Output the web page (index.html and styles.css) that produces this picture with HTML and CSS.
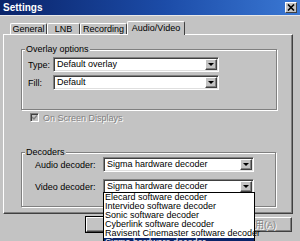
FILE: index.html
```html
<!DOCTYPE html>
<html lang="ja">
<head>
    <meta charset="UTF-8">
    <title>Settings</title>
    <link rel="stylesheet" href="styles.css">
</head>
<body>
    <div class="titlebar">
        <span class="title">Settings</span>
        <span class="close-btn">
            <svg width="8" height="7" viewBox="0 0 8 7"><path d="M1 0.5 L7 6.5 M7 0.5 L1 6.5" stroke="#000" stroke-width="1.6"/></svg>
        </span>
    </div>
    <div class="dialog">
        <div class="tabs">
            <div class="tab tab-general">General</div>
            <div class="tab tab-lnb">LNB</div>
            <div class="tab tab-recording">Recording</div>
            <div class="tab tab-av selected">Audio/Video</div>
        </div>
        <div class="panel">
            <fieldset class="group group-overlay">
                <legend>Overlay options</legend>
                <div class="field">
                    <label class="field-label">Type:</label>
                    <div class="combo combo-overlay"><span class="combo-text">Default overlay</span><span class="combo-btn"></span></div>
                </div>
                <div class="field">
                    <label class="field-label">Fill:</label>
                    <div class="combo combo-overlay"><span class="combo-text">Default</span><span class="combo-btn"></span></div>
                </div>
            </fieldset>

            <div class="check-row disabled">
                <span class="checkbox">
                    <svg width="5" height="5" viewBox="0 0 5 5"><path d="M0 2 L2 4 L5 0.5" stroke="#808080" stroke-width="1.4" fill="none"/></svg>
                </span>
                <span class="check-label">On Screen Displays</span>
            </div>

            <fieldset class="group group-decoders">
                <legend>Decoders</legend>
                <div class="field">
                    <label class="field-label">Audio decoder:</label>
                    <div class="combo combo-decoder"><span class="combo-text">Sigma hardware decoder</span><span class="combo-btn"></span></div>
                </div>
                <div class="field">
                    <label class="field-label">Video decoder:</label>
                    <div class="combo combo-decoder open">
                        <span class="combo-text">Sigma hardware decoder</span><span class="combo-btn"></span>
                        <ul class="dropdown">
                            <li>Elecard software decoder</li>
                            <li>Intervideo software decoder</li>
                            <li>Sonic software decoder</li>
                            <li>Cyberlink software decoder</li>
                            <li>Ravisent Cinemaster software decoder</li>
                            <li class="active">Sigma hardware decoder</li>
                        </ul>
                    </div>
                </div>
            </fieldset>
        </div>
        <div class="buttons">
            <button class="btn default">OK</button>
            <button class="btn">キャンセル</button>
            <button class="btn" disabled>適用(A)</button>
        </div>
    </div>
</body>
</html>
```

FILE: styles.css
```css
body {
    margin: 0;
    width: 300px;
    height: 241px;
    overflow: hidden;
    background-color: #c3c3c3;
    font-family: "Liberation Sans", Arial, "Noto Sans CJK JP", sans-serif;
    font-size: 9px;
    color: #000;
}
.titlebar {
    height: 15px;
    display: flex;
    align-items: center;
    justify-content: space-between;
    padding: 0 3px;
    background: linear-gradient(to right, #0a246a 0%, #1c4ca8 55%, #3a78d4 100%);
    border-bottom: 1px solid #e8e8e8;
}
.title {
    color: #fff;
    font-weight: bold;
    font-size: 10px;
}
.close-btn {
    width: 12px;
    height: 11px;
    box-sizing: border-box;
    display: flex;
    align-items: center;
    justify-content: center;
    background-color: #c3c3c3;
    border: 1px solid;
    border-color: #fff #404040 #404040 #fff;
}
.dialog {
    padding-left: 3px;
}
.tabs {
    display: flex;
    align-items: flex-end;
    height: 13px;
    margin-top: 5px;
    padding-left: 7px;
}
.tab {
    height: 11px;
    line-height: 10px;
    box-sizing: border-box;
    text-align: center;
    border-top: 1px solid #fff;
    border-left: 1px solid #fff;
    border-right: 1px solid #404040;
    border-radius: 2px 2px 0 0;
}
.tab-general { width: 37px; }
.tab-lnb { width: 33px; }
.tab-recording { width: 47px; }
.tab-av { width: 58px; }
.tab.selected {
    position: relative;
    z-index: 1;
    height: 14px;
    line-height: 12px;
    margin-bottom: -1px;
    background-color: #c3c3c3;
}
.panel {
    width: 290px;
    height: 180px;
    box-sizing: border-box;
    padding: 9px 0 0 17px;
    border: 1px solid;
    border-color: #fff #404040 #404040 #fff;
    box-shadow: inset -1px -1px 0 #808080;
}
.group {
    margin: 0;
    padding: 3px 0 19px 0;
    box-sizing: border-box;
    border: 1px solid #808080;
    box-shadow: 1px 1px 0 #fff, inset 1px 1px 0 #fff;
}
.group legend {
    margin-left: 3px;
    padding: 0 1px;
    line-height: 10px;
    background-color: #c3c3c3;
}
.group-overlay {
    width: 256px;
}
.group-overlay .field {
    padding-left: 6px;
}
.group-overlay .field + .field {
    margin-top: 3px;
}
.group-overlay .field-label {
    width: 25px;
}
.group-decoders {
    width: 255px;
    margin-top: 25px;
    padding-top: 0;
    padding-bottom: 12px;
}
.group-decoders .field {
    padding-left: 13px;
}
.group-decoders .field + .field {
    margin-top: 7px;
}
.group-decoders .field-label {
    width: 68px;
}
.field {
    display: flex;
    align-items: center;
    height: 15px;
}
.combo {
    position: relative;
    display: flex;
    align-items: center;
    height: 15px;
    box-sizing: border-box;
    padding: 1px;
    background-color: #fff;
    border: 1px solid;
    border-color: #808080 #fff #fff #808080;
    box-shadow: inset 1px 1px 0 #404040, inset -1px -1px 0 #dfdfdf;
}
.combo-overlay { width: 166px; }
.combo-decoder { width: 151px; }
.combo-text {
    flex: 1;
    padding-left: 2px;
    line-height: 11px;
    white-space: nowrap;
}
.combo-btn {
    width: 12px;
    height: 11px;
    box-sizing: border-box;
    display: flex;
    align-items: center;
    justify-content: center;
    background-color: #c3c3c3;
    border: 1px solid;
    border-color: #fff #404040 #404040 #fff;
    box-shadow: inset -1px -1px 0 #808080;
}
.combo-btn::after {
    content: "";
    border-left: 3px solid transparent;
    border-right: 3px solid transparent;
    border-top: 3px solid #000;
}
.dropdown {
    position: absolute;
    top: 100%;
    left: -1px;
    z-index: 5;
    width: 152px;
    box-sizing: border-box;
    margin: -1px 0 0 0;
    padding: 0;
    list-style: none;
    background-color: #fff;
    border: 1px solid #000;
}
.dropdown li {
    height: 9px;
    line-height: 9px;
    padding-left: 1px;
    white-space: nowrap;
}
.dropdown li.active {
    background-color: #0a246a;
    color: #fff;
}
.check-row {
    display: flex;
    align-items: center;
    height: 9px;
    margin: 3px 0 0 9px;
}
.checkbox {
    width: 9px;
    height: 9px;
    box-sizing: border-box;
    display: flex;
    align-items: center;
    justify-content: center;
    border: 1px solid;
    border-color: #808080 #fff #fff #808080;
    box-shadow: inset 1px 1px 0 #404040;
}
.check-label {
    margin-left: 4px;
}
.disabled .check-label {
    color: #808080;
    text-shadow: 1px 1px 0 #fff;
}
.buttons {
    display: flex;
    gap: 10px;
    margin-top: 3px;
    padding-left: 83px;
}
.btn {
    width: 62px;
    height: 15px;
    padding: 0;
    font-family: "Liberation Sans", Arial, "Noto Sans CJK JP", sans-serif;
    font-size: 9px;
    background-color: #c3c3c3;
    color: #000;
    border: 1px solid;
    border-color: #fff #404040 #404040 #fff;
    box-shadow: inset -1px -1px 0 #808080;
}
.btn.default {
    outline: 1px solid #000;
}
.btn:disabled {
    color: #808080;
    text-shadow: 1px 1px 0 #fff;
}
```
